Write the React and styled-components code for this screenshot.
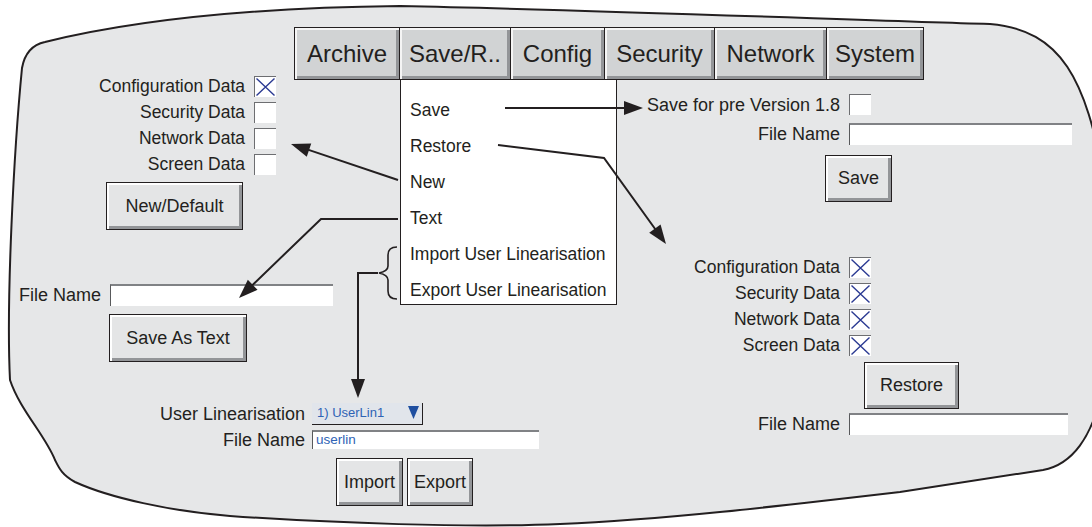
import React from 'react';
import styled, { createGlobalStyle } from 'styled-components';

const INK = '#231f20';
const PANEL = '#e6e7e8';
const BLUE_TEXT = '#2e63b5';
const BLUE_MARK = '#2b3a93';

const Global = createGlobalStyle`
  html, body { margin: 0; padding: 0; background: #ffffff; overflow: hidden; }
  body { font-family: "Liberation Sans", Arial, sans-serif; color: ${INK}; }
`;

const Canvas = styled.div`
  position: relative;
  width: 1092px;
  height: 527px;
  overflow: hidden;
  background: #ffffff;
  font-family: "Liberation Sans", Arial, sans-serif;
  color: ${INK};
`;

const Layer = styled.svg`
  position: absolute;
  left: 0;
  top: 0;
  width: 1092px;
  height: 527px;
  pointer-events: none;
  z-index: ${(p) => p.$z};
`;

const Node = styled.div`
  position: absolute;
  left: ${(p) => p.$x}px;
  top: ${(p) => p.$y}px;
  z-index: 1;
`;

const TabBar = styled.div`
  display: flex;
  gap: 1px;
  padding: 1px;
  background: ${INK};
`;

const Tab = styled.div`
  width: ${(p) => p.$w}px;
  height: 51px;
  display: flex;
  align-items: center;
  justify-content: center;
  background: #d1d3d4;
  box-shadow: inset 2px 2px 0 #f5f5f5, inset -3px -3px 0 #939598;
  font-size: 24px;
  white-space: nowrap;
`;

const Menu = styled.div`
  width: 217px;
  height: 226px;
  box-sizing: border-box;
  background: #ffffff;
  border: 1px solid ${INK};
  padding-top: 12px;
  display: flex;
  flex-direction: column;
`;

const MenuItem = styled.div`
  flex: 0 0 36px;
  height: 36px;
  display: flex;
  align-items: center;
  padding-left: 9px;
  font-size: 17.5px;
  white-space: nowrap;
`;

const Stack = styled.div`
  display: flex;
  flex-direction: column;
  align-items: flex-start;
`;

const FormGrid = styled.div`
  display: grid;
  grid-template-columns: ${(p) => p.$label}px auto;
  column-gap: ${(p) => p.$gap}px;
  row-gap: ${(p) => p.$rowGap}px;
  align-items: center;
`;

const Label = styled.span`
  justify-self: end;
  font-size: ${(p) => p.$size}px;
  white-space: nowrap;
  line-height: 1;
`;

const CheckBox = styled.div`
  width: 22px;
  height: 21px;
  box-sizing: border-box;
  background: #ffffff;
  border-top: 1px solid #6d6e71;
  border-left: 1px solid #6d6e71;
  display: flex;
  align-items: center;
  justify-content: center;
`;

const Field = styled.div`
  width: ${(p) => p.$w}px;
  height: ${(p) => p.$h}px;
  box-sizing: border-box;
  background: #ffffff;
  border-top: 2px solid #808285;
  border-left: 1px solid #58595b;
  padding: 0 3px;
  font-size: 13.5px;
  line-height: 15px;
  color: ${BLUE_TEXT};
`;

const Select = styled.div`
  width: 111px;
  height: 22px;
  box-sizing: border-box;
  background: #e1e5eb;
  border-right: 1px solid ${INK};
  border-bottom: 1px solid ${INK};
  padding: 0 3px 2px 5px;
  display: flex;
  align-items: center;
  justify-content: space-between;
  font-size: 13px;
  color: ${BLUE_TEXT};
`;

const Button = styled.div`
  width: ${(p) => p.$w}px;
  height: ${(p) => p.$h}px;
  box-sizing: border-box;
  border: 1px solid ${INK};
  background: #e4e5e6;
  box-shadow: inset 2px 2px 0 #ffffff, inset -3px -3px 0 #939598;
  display: flex;
  align-items: center;
  justify-content: center;
  font-size: 18px;
  margin-left: ${(p) => p.$ml || 0}px;
  margin-top: ${(p) => p.$mt || 0}px;
  white-space: nowrap;
`;

const ButtonRow = styled.div`
  display: flex;
  gap: 4px;
  margin-left: ${(p) => p.$ml}px;
  margin-top: ${(p) => p.$mt}px;
`;

const Spaced = styled.div`
  margin-top: ${(p) => p.$mt}px;
`;

const Cross = () => (
  <svg width="21" height="20" viewBox="0 0 21 20">
    <path d="M1.5 1.5 L19.5 18.5 M19.5 1.5 L1.5 18.5" stroke={BLUE_MARK} strokeWidth="1.4" fill="none" />
  </svg>
);

const Check = ({ on }) => <CheckBox>{on ? <Cross /> : null}</CheckBox>;

const DownTriangle = () => (
  <svg width="11" height="13" viewBox="0 0 11 13">
    <path d="M0 0 L11 0 L5.5 13 Z" fill="#1f4fa0" />
  </svg>
);

const tabs = [
  ['Archive', 104],
  ['Save/R..', 110],
  ['Config', 93],
  ['Security', 109],
  ['Network', 111],
  ['System', 96],
];

const menuItems = ['Save', 'Restore', 'New', 'Text', 'Import User Linearisation', 'Export User Linearisation'];
const dataItems = ['Configuration Data', 'Security Data', 'Network Data', 'Screen Data'];

function head(a, b, len = 19, half = 7) {
  const [x1, y1] = a;
  const [x2, y2] = b;
  const dx = x2 - x1;
  const dy = y2 - y1;
  const d = Math.hypot(dx, dy);
  const ux = dx / d;
  const uy = dy / d;
  const bx = x2 - ux * len;
  const by = y2 - uy * len;
  return {
    poly: `${x2},${y2} ${bx - uy * half},${by + ux * half} ${bx + uy * half},${by - ux * half}`,
    base: [bx + ux * 2, by + uy * 2],
  };
}

const arrows = [
  [[505, 108], [643, 108]],
  [[498, 145], [604, 158], [666, 244]],
  [[398, 180], [291, 144]],
  [[398, 219], [321, 219], [239, 298]],
  [[378, 273], [358, 273], [358, 398]],
];

const Arrow = ({ pts }) => {
  const n = pts.length;
  const h = head(pts[n - 2], pts[n - 1]);
  const linePts = [...pts.slice(0, n - 1), h.base].map((p) => p.join(',')).join(' ');
  return (
    <g>
      <polyline points={linePts} fill="none" stroke={INK} strokeWidth="2" strokeLinejoin="miter" />
      <polygon points={h.poly} fill={INK} />
    </g>
  );
};

const BLOB =
  'M 45,42 C 110,26 220,8 400,6 C 600,10 850,20 990,24 C 1062,30 1086,80 1104,180 L 1125,270 L 1104,380 ' +
  'C 1094,440 1070,465 1043,470 L 900,492 C 780,506 660,520 560,524 C 470,528 330,523 230,516 ' +
  'C 170,511 110,498 75,482 C 62,475 59,468 55,460 C 45,435 20,410 10,380 C 6,300 14,150 22,68 Q 26,46 45,42 Z';

export default function App() {
  return (
    <>
      <Global />
      <Canvas>
        <Layer $z={0} viewBox="0 0 1092 527">
          <path d={BLOB} fill={PANEL} stroke={INK} strokeWidth="2" />
        </Layer>

        <Node $x={294} $y={27}>
          <TabBar>
            {tabs.map(([t, w]) => (
              <Tab key={t} $w={w}>{t}</Tab>
            ))}
          </TabBar>
        </Node>

        <Node $x={400} $y={79}>
          <Menu>
            {menuItems.map((m) => (
              <MenuItem key={m}>{m}</MenuItem>
            ))}
          </Menu>
        </Node>

        <Node $x={85} $y={76}>
          <Stack>
            <FormGrid $label={160} $gap={9} $rowGap={5}>
              {dataItems.map((d, i) => (
                <React.Fragment key={d}>
                  <Label $size={17.5}>{d}</Label>
                  <Check on={i === 0} />
                </React.Fragment>
              ))}
            </FormGrid>
            <Button $w={137} $h={48} $ml={21} $mt={7}>New/Default</Button>
          </Stack>
        </Node>

        <Node $x={19} $y={284}>
          <Stack>
            <FormGrid $label={82} $gap={9} $rowGap={0}>
              <Label $size={18}>File Name</Label>
              <Field $w={223} $h={22} />
            </FormGrid>
            <Button $w={138} $h={48} $ml={90} $mt={8}>Save As Text</Button>
          </Stack>
        </Node>

        <Node $x={640} $y={94}>
          <Stack>
            <FormGrid $label={200} $gap={9} $rowGap={8}>
              <Label $size={18}>Save for pre Version 1.8</Label>
              <Check on={false} />
              <Label $size={18}>File Name</Label>
              <Field $w={223} $h={22} />
            </FormGrid>
            <Button $w={67} $h={47} $ml={185} $mt={10}>Save</Button>
          </Stack>
        </Node>

        <Node $x={640} $y={257}>
          <Stack>
            <FormGrid $label={200} $gap={9} $rowGap={5}>
              {dataItems.map((d) => (
                <React.Fragment key={d}>
                  <Label $size={17.5}>{d}</Label>
                  <Check on />
                </React.Fragment>
              ))}
            </FormGrid>
            <Button $w={95} $h={47} $ml={224} $mt={6}>Restore</Button>
            <Spaced $mt={4}>
              <FormGrid $label={200} $gap={9} $rowGap={0}>
                <Label $size={18}>File Name</Label>
                <Field $w={219} $h={22} />
              </FormGrid>
            </Spaced>
          </Stack>
        </Node>

        <Node $x={135} $y={403}>
          <Stack>
            <FormGrid $label={170} $gap={7} $rowGap={5}>
              <Label $size={18}>User Linearisation</Label>
              <Select>
                <span>1) UserLin1</span>
                <DownTriangle />
              </Select>
              <Label $size={18}>File Name</Label>
              <Field $w={227} $h={19}>userlin</Field>
            </FormGrid>
            <ButtonRow $ml={201} $mt={9}>
              <Button $w={67} $h={48}>Import</Button>
              <Button $w={66} $h={48}>Export</Button>
            </ButtonRow>
          </Stack>
        </Node>

        <Layer $z={2} viewBox="0 0 1092 527">
          {arrows.map((a, i) => (
            <Arrow key={i} pts={a} />
          ))}
          <path
            d="M 397,247 C 390,247 388,250 388,255 L 388,266 C 388,270 384,272 379,273 C 384,274 388,276 388,280 L 388,291 C 388,296 390,299 397,299"
            fill="none"
            stroke={INK}
            strokeWidth="1.6"
          />
        </Layer>
      </Canvas>
    </>
  );
}
